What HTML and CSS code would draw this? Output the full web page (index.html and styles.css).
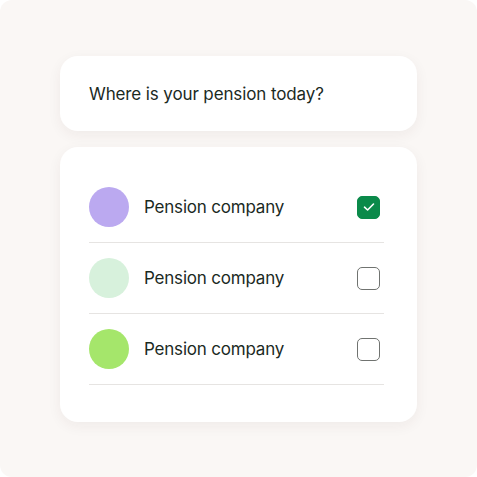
FILE: index.html
```html
<!DOCTYPE html>
<html lang="en">
<head>
<meta charset="utf-8">
<link rel="stylesheet" href="styles.css">
</head>
<body>
<div class="frame">
  <div class="card question">
    <p class="q-text">Where is your pension today?</p>
  </div>
  <div class="card list">
    <div class="row">
      <span class="dot dot-purple"></span>
      <span class="label">Pension company</span>
      <span class="check checked">
        <svg width="12" height="10" viewBox="0 0 12 10"><path d="M1.5 5.2 L4.6 8 L10.5 2" fill="none" stroke="#fff" stroke-width="1.6" stroke-linecap="round" stroke-linejoin="round"/></svg>
      </span>
    </div>
    <div class="row">
      <span class="dot dot-mint"></span>
      <span class="label">Pension company</span>
      <span class="check"></span>
    </div>
    <div class="row">
      <span class="dot dot-lime"></span>
      <span class="label">Pension company</span>
      <span class="check"></span>
    </div>
  </div>
</div>
</body>
</html>
```

FILE: styles.css
```css
html, body {
  margin: 0;
  padding: 0;
  background: #ffffff;
}
body {
  font-family: "Inter", "Noto Sans", sans-serif;
  color: #1b2a1f;
}
.frame {
  width: 477px;
  height: 477px;
  box-sizing: border-box;
  background: #faf7f5;
  border-radius: 12px;
  padding: 56px 60px 0 60px;
  display: flex;
  flex-direction: column;
  gap: 16px;
}
.card {
  background: #ffffff;
  border-radius: 18px;
  box-shadow: 0 4px 14px rgba(60, 40, 30, 0.06);
}
.question {
  height: 75px;
  box-sizing: border-box;
  padding: 0 29px;
  display: flex;
  align-items: center;
}
.q-text {
  margin: 0;
  font-size: 17px;
  letter-spacing: -0.12px;
}
.list {
  height: 275px;
  box-sizing: border-box;
  padding: 25px 33px 0 29px;
}
.row {
  height: 70px;
  display: flex;
  align-items: center;
  border-bottom: 1px solid #e6e4e2;
}
.dot {
  width: 40px;
  height: 40px;
  border-radius: 50%;
  flex: none;
}
.dot-purple { background: #bba9f0; }
.dot-mint { background: #d7f1dc; }
.dot-lime { background: #a5e66b; }
.label {
  margin-left: 15px;
  font-size: 17px;
  letter-spacing: -0.2px;
  flex: 1;
}
.check {
  width: 21px;
  height: 21px;
  border: 1.5px solid #707370;
  border-radius: 5px;
  flex: none;
  margin-right: 4px;
  display: flex;
  align-items: center;
  justify-content: center;
}
.check.checked {
  background: #0b8a4a;
  border-color: #0b8a4a;
}
```
